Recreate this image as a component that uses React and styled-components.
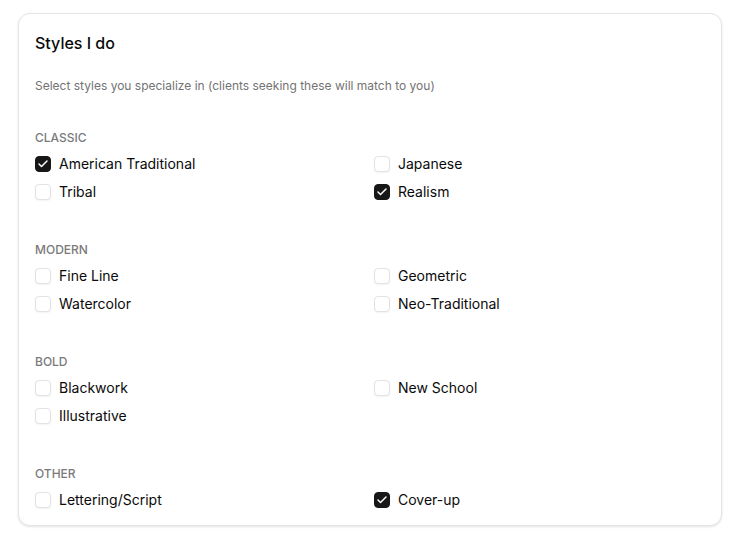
import React, { useState } from "react";
import styled, { createGlobalStyle } from "styled-components";

const Global = createGlobalStyle`
  html, body { margin: 0; padding: 0; background: #ffffff; }
  body { font-family: Inter, "Noto Sans", sans-serif; -webkit-font-smoothing: antialiased; }
`;

const Page = styled.div`
  padding: 13px 12px 14px 18px;
`;

const Card = styled.section`
  width: 704px;
  box-sizing: border-box;
  border: 1px solid #e5e5e5;
  border-radius: 12px;
  background: #fff;
  box-shadow: 0 1px 3px rgba(0,0,0,0.08), 0 1px 2px rgba(0,0,0,0.04);
  padding: 17px 16px 15px 16px;
`;

const Title = styled.h2`
  margin: 0;
  font-size: 16px;
  line-height: 24px;
  font-weight: 500;
  color: #0a0a0a;
`;

const Subtitle = styled.p`
  margin: 23px 0 0;
  font-size: 12px;
  line-height: 16px;
  color: #737373;
`;

const Sections = styled.div`
  display: flex;
  flex-direction: column;
  gap: 40px;
  margin-top: 36px;
`;

const Section = styled.div`
  display: flex;
  flex-direction: column;
  gap: 8px;
`;

const SectionLabel = styled.div`
  font-size: 12px;
  line-height: 16px;
  font-weight: 500;
  color: #7a7a7a;
  text-transform: uppercase;
`;

const Grid = styled.div`
  display: grid;
  grid-template-columns: 1fr 1fr;
  column-gap: 8px;
  row-gap: 8px;
`;

const Row = styled.label`
  display: flex;
  align-items: center;
  gap: 8px;
  height: 20px;
  cursor: pointer;
`;

const Box = styled.span`
  width: 16px;
  height: 16px;
  box-sizing: border-box;
  border-radius: 4px;
  border: 1px solid ${(p) => (p.$checked ? "#171717" : "#e2e2e2")};
  background: ${(p) => (p.$checked ? "#171717" : "#fff")};
  box-shadow: ${(p) => (p.$checked ? "none" : "0 1px 2px rgba(0,0,0,0.05)")};
  display: flex;
  align-items: center;
  justify-content: center;
  flex-shrink: 0;
`;

const Text = styled.span`
  font-size: 14px;
  line-height: 20px;
  color: #0a0a0a;
`;

const data = [
  { name: "Classic", items: ["American Traditional", "Japanese", "Tribal", "Realism"] },
  { name: "Modern", items: ["Fine Line", "Geometric", "Watercolor", "Neo-Traditional"] },
  { name: "Bold", items: ["Blackwork", "New School", "Illustrative"] },
  { name: "Other", items: ["Lettering/Script", "Cover-up"] },
];

function Check({ label, checked, onToggle }) {
  return (
    <Row onClick={onToggle}>
      <Box $checked={checked}>
        {checked && (
          <svg width="12" height="12" viewBox="0 0 24 24" fill="none" stroke="#fff" strokeWidth="3" strokeLinecap="round" strokeLinejoin="round">
            <path d="M20 6 9 17l-5-5" />
          </svg>
        )}
      </Box>
      <Text>{label}</Text>
    </Row>
  );
}

export default function App() {
  const [sel, setSel] = useState({ "American Traditional": true, Realism: true, "Cover-up": true });
  const toggle = (k) => setSel((s) => ({ ...s, [k]: !s[k] }));
  return (
    <Page>
      <Global />
      <Card>
        <Title>Styles I do</Title>
        <Subtitle>Select styles you specialize in (clients seeking these will match to you)</Subtitle>
        <Sections>
          {data.map((sec) => (
            <Section key={sec.name}>
              <SectionLabel>{sec.name}</SectionLabel>
              <Grid>
                {sec.items.map((it) => (
                  <Check key={it} label={it} checked={!!sel[it]} onToggle={() => toggle(it)} />
                ))}
              </Grid>
            </Section>
          ))}
        </Sections>
      </Card>
    </Page>
  );
}
